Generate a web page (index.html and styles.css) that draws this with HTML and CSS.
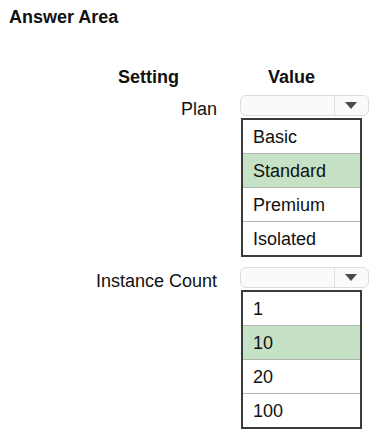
FILE: index.html
```html
<!DOCTYPE html>
<html>
<head>
    <meta charset="utf-8">
    <title>Answer Area</title>
<link rel="stylesheet" href="styles.css">
</head>
<body>

  <h1 class="title">Answer Area</h1>

  <div class="heads">
    <span class="head-setting">Setting</span>
    <span class="head-value">Value</span>
  </div>

  <div class="field field-plan">
    <div class="label">Plan</div>
    <div class="value">
      <div class="select"><span class="select-box"></span><span class="select-arrow"></span></div>
      <ul class="options">
        <li>Basic</li>
        <li class="picked">Standard</li>
        <li>Premium</li>
        <li>Isolated</li>
      </ul>
    </div>
  </div>

  <div class="field field-count">
    <div class="label">Instance Count</div>
    <div class="value">
      <div class="select"><span class="select-box"></span><span class="select-arrow"></span></div>
      <ul class="options">
        <li>1</li>
        <li class="picked">10</li>
        <li>20</li>
        <li>100</li>
      </ul>
    </div>
  </div>

</body>
</html>
```

FILE: styles.css
```css
/* общие стили */
body {
  margin: 0;
  background: #fff;
  color: #111;
  font-family: "Liberation Sans", Arial, sans-serif;
  font-size: 18px;
}

.title {
  margin: 0;
  padding: 7px 0 0 9px;
  font-size: 18px;
  line-height: 20px;
  font-weight: bold;
}

.heads {
  display: flex;
  margin-top: 40px;
  font-weight: bold;
  line-height: 20px;
}

.head-setting {
  margin-left: 118px;
}

.head-value {
  margin-left: 89px;
}

/* строки с выпадающими списками */
.field {
  display: flex;
}

.field-plan {
  margin-top: 8px;
}

.field-count {
  margin-top: 10px;
}

.label {
  width: 217px;
  text-align: right;
  line-height: 20px;
  padding-top: 4px;
}

.value {
  margin-left: 23px;
  width: 129px;
}

.select {
  display: flex;
  height: 21px;
  box-sizing: border-box;
  border: 1px solid #dcdcdc;
  border-radius: 6px;
  background: #fcf9f9;
}

.select-box {
  flex: 1;
}

.select-arrow {
  width: 33px;
  border-left: 1px solid #dedede;
  position: relative;
}

.select-arrow::after {
  content: "";
  position: absolute;
  left: 10px;
  top: 6px;
  border-left: 6px solid transparent;
  border-right: 6px solid transparent;
  border-top: 7px solid #4a4a4a;
}

.options {
  list-style: none;
  margin: 2px 0 0 1px;
  padding: 0;
  width: 121px;
  box-sizing: border-box;
  border: 2px solid #3a3a3a;
}

.options li {
  height: 33px;
  box-sizing: border-box;
  padding: 2px 0 0 10px;
  line-height: 31px;
  border-top: 1px solid #b4b4b4;
}

.options li + li {
  height: 34px;
}

.options li:first-child {
  border-top: none;
}

.options .picked {
  background: #c6e2c6;
}
```
